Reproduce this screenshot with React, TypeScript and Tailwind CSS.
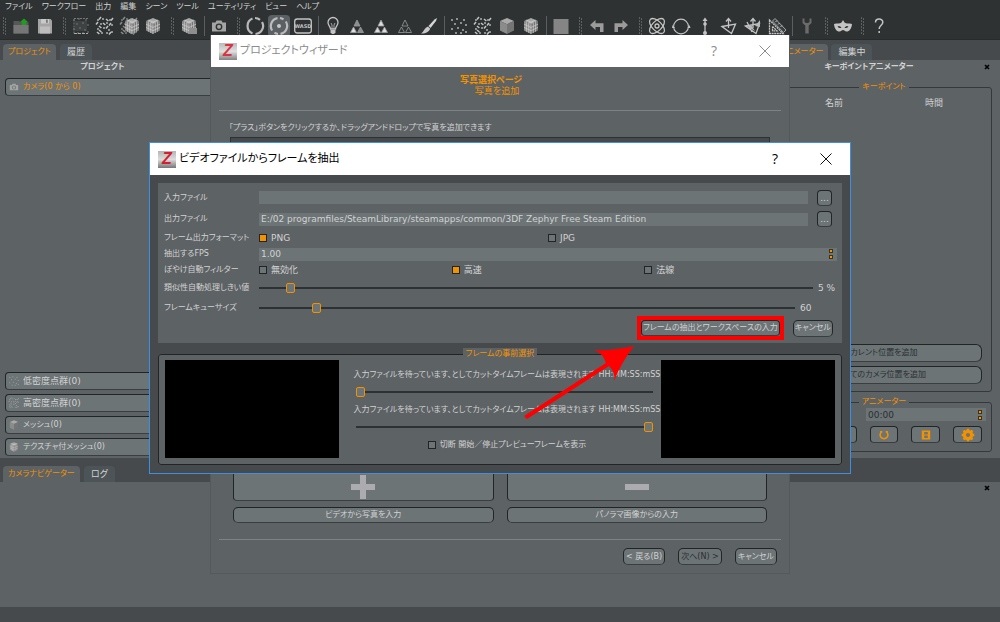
import React, { useState } from "react";

const stroke = { fill: "none", stroke: "#c4c4c4", strokeWidth: 1.3 } as const;

type IconProps = { children: React.ReactNode; className?: string };

function Icon({ children, className = "size-5" }: IconProps) {
  return (
    <svg viewBox="0 0 20 20" className={className} aria-hidden="true">
      {children}
    </svg>
  );
}

function Dots({ dense, color = "#c4c4c4" }: { dense?: boolean; color?: string }) {
  const sparse = [
    [3, 4], [8, 3], [15, 4], [6, 8], [12, 7], [17, 9], [3, 13], [9, 12], [14, 14], [7, 17], [12, 17], [17, 16],
  ];
  const extra = [
    [5, 2], [12, 4], [2, 7], [9, 8], [15, 8], [5, 11], [12, 11], [5, 15], [15, 17], [3, 17], [17, 3],
  ];
  return (
    <g fill={color}>
      {sparse.map(([x, y]) => (
        <rect key={`${x}-${y}`} x={x - 0.8} y={y - 0.8} width="1.6" height="1.6" />
      ))}
      {dense &&
        extra.map(([x, y], i) => (
          <path
            key={`${x}-${y}`}
            d={i % 2 ? `M${x - 1} ${y - 1} l2.4 2` : `M${x + 1} ${y - 1} l-2 2.4`}
            stroke={color}
            strokeWidth="1.5"
          />
        ))}
    </g>
  );
}

function Cube({ mesh }: { mesh?: boolean }) {
  return (
    <g>
      <path d="M10 2 L17 5 L10 8.3 L3 5Z" fill="#a9a9a9" />
      <path d="M3 5 L10 8.3 V18 L3 14.5Z" fill="#8b8b8b" />
      <path d="M17 5 L10 8.3 V18 L17 14.5Z" fill="#757575" />
      {mesh && (
        <path
          d="M3 8.2 L10 11.5 L17 8.2 M3 11.4 L10 14.7 L17 11.4 M5.4 6 V15.7 M7.7 7.2 V16.9 M12.3 7.2 V16.9 M14.6 6 V15.7 M5.4 4 L12.3 7.2 M14.6 4 L7.7 7.2 M10 8.3V18"
          fill="none"
          stroke="#d0d0d0"
          strokeWidth="0.7"
        />
      )}
    </g>
  );
}

function CameraShape({ hole = "#2e3233" }: { hole?: string }) {
  return (
    <g>
      <path d="M3 6.5 H6.5 L7.5 4.5 H12.5 L13.5 6.5 H17 V15.5 H3Z" fill="#a4a4a4" />
      <circle cx="10" cy="10.8" r="3.4" fill={hole} />
      <circle cx="10" cy="10.8" r="2" fill="#a4a4a4" />
    </g>
  );
}

function Triangles({ a, b, c }: { a: string; b: string; c: string }) {
  return (
    <g stroke="#9a9a9a" strokeWidth="0.8">
      <path d="M10 4 L13 10 H7Z" fill={a} />
      <path d="M6.5 11 L9.5 16.5 H3.5Z" fill={b} />
      <path d="M13.5 11 L16.5 16.5 H10.5Z" fill={c} />
    </g>
  );
}

type Tool = { kind: "handle" } | { kind: "sep" } | { kind: "tool"; label: string; on?: boolean; art: React.ReactNode };

const handle: Tool = { kind: "handle" };
const sep: Tool = { kind: "sep" };
const tool = (label: string, art: React.ReactNode, on?: boolean): Tool => ({ kind: "tool", label, art, on });

const tools: Tool[] = [
  handle,
  tool("open", (
    <g>
      <path d="M2.5 5 H8 L9.5 6.5 H17.5 V17.5 H2.5Z" fill="#575757" />
      <path d="M2.5 9 H17.5 V17.5 H2.5Z" fill="#767676" />
      <path d="M13 2.5 L17.5 6.5 H15.3 V9 H10.7 V6.5 H8.5Z" fill="#249a24" />
    </g>
  )),
  tool("save", (
    <g>
      <path d="M3 3 H15.5 L17 4.5 V17.5 H3Z" fill="#a5a5a5" />
      <rect x="6" y="3" width="8" height="4.5" fill="#c9c9c9" />
      <rect x="11" y="3.6" width="1.8" height="3.2" fill="#777" />
      <rect x="5" y="10.5" width="10" height="7" fill="#bdbdbd" />
    </g>
  )),
  handle,
  tool("sparse", (
    <g>
      <rect x="4" y="5" width="12" height="10" fill="#3f4243" />
      <Dots color="#696969" />
      <path d="M3 17.5 V2.5 H17" fill="none" stroke="#777" strokeWidth="1" strokeDasharray="2 1" />
      <path d="M3 17.5 H17" stroke="#aaa" strokeWidth="1" strokeDasharray="3 1" />
    </g>
  )),
  tool("dense", <Dots dense />),
  tool("mesh", <g><Dots dense color="#8b8b8b" /><g transform="translate(3 0)"><Cube mesh /></g></g>),
  tool("texture", <Cube mesh />),
  handle,
  tool("export", <g><Cube mesh /><path d="M11 12 H18 V18 H9Z" fill="#8e8e8e" /></g>),
  sep,
  tool("camera", <CameraShape />),
  handle,
  tool("orbit", <path d="M7.5 2.6 A8 8 0 0 0 7.5 17.4 M10.5 18 A8 8 0 0 0 17 6 M10 2 A8 8 0 0 1 15 3.8" fill="none" stroke="#b9b9b9" strokeWidth="2.2" />),
  tool("pivot", (
    <g>
      <path d="M8.5 2.2 A8 8 0 0 0 3.2 14.5 M11.5 17.8 A8 8 0 0 0 16.8 5.5 M11 2 A8 8 0 0 1 14.5 3.4 M9 18 A8 8 0 0 1 5.5 16.6" fill="none" stroke="#bcbcbc" strokeWidth="2.2" />
      <circle cx="10" cy="10" r="2" fill="#c8c8c8" />
    </g>
  ), true),
  tool("wasd", (
    <g>
      <rect x="1.7" y="3" width="16.6" height="14" rx="2.5" {...stroke} />
      <text x="10" y="12.2" textAnchor="middle" fontSize="5" fontWeight="700" fill="#c4c4c4">WASD</text>
    </g>
  )),
  sep,
  tool("light", (
    <g>
      <path d="M7.5 13 C7.5 10.5 5 9.5 5 6.5 A5 5 0 0 1 15 6.5 C15 9.5 12.5 10.5 12.5 13Z" {...stroke} />
      <path d="M8 7 L9 9 V13 M12 7 L11 9 V13" {...stroke} strokeWidth="0.8" />
      <path d="M7.5 14 H12.5 V16.5 L11 18 H9 L7.5 16.5Z" fill="#c4c4c4" />
    </g>
  )),
  tool("triangles one", <Triangles a="#8d8d8d" b="#dedede" c="#8d8d8d" />),
  tool("triangles all", <Triangles a="#dedede" b="#dedede" c="#dedede" />),
  tool("triangles wire", <Triangles a="none" b="none" c="none" />),
  tool("brush", (
    <g>
      <path d="M18 2 L17 5 L11.5 12 L9.5 10 L15.5 3.5Z" fill="#d6d6d6" />
      <path d="M9 10.5 L11.2 12.8 C10 16 6 18 2 17.5 C5 16 5 12 9 10.5Z" fill="#c9c9c9" />
    </g>
  )),
  sep,
  tool("sparse cloud", <Dots />),
  tool("dense cloud", <Dots dense />),
  tool("solid cube", <Cube />),
  tool("textured cube", <Cube mesh />),
  sep,
  tool("plane", <rect x="2.5" y="3" width="15" height="15" fill="#858585" />),
  handle,
  tool("undo", <path d="M3 9 L8.5 4 V7.2 H16.5 V16 H13 V11 H8.5 V14Z" fill="#9b9b9b" />),
  tool("redo", <path d="M17 9 L11.5 4 V7.2 H3.5 V16 H7 V11 H11.5 V14Z" fill="#9b9b9b" />),
  handle,
  tool("atom", (
    <g {...stroke}>
      <ellipse cx="10" cy="10" rx="9.4" ry="4.8" transform="rotate(45 10 10)" />
      <ellipse cx="10" cy="10" rx="9.4" ry="4.8" transform="rotate(-45 10 10)" />
      <circle cx="10" cy="10" r="2" />
    </g>
  )),
  tool("circle", <g><circle cx="10" cy="10.5" r="7.4" {...stroke} strokeWidth="1.1" /><path d="M1.5 9 l-0.5 3 h3Z M18.5 9 l-2 3 h3Z" fill="#c4c4c4" /></g>),
  tool("height", <g><path d="M10 4 V16" {...stroke} /><path d="M10 1.5 L12.5 5 H7.5Z" fill="#c4c4c4" /><circle cx="10" cy="8" r="1.8" fill="#c4c4c4" /><circle cx="10" cy="17" r="2" fill="#c4c4c4" /></g>),
  tool("plane axis", <g><path d="M3 10.5 L16.5 8 L12.5 17.5Z M9.5 12 V3.5 M7 5.5 L9.5 2.5 L12 5.5" {...stroke} /></g>),
  tool("move plane", <g><path d="M2.5 10 L16.5 7.5 L13 17.5Z M10 12 V3 M7.5 5.5 L10 2.5 L12.5 5.5 M4 6 L9 16" {...stroke} /><path d="M3 10 L8 9 L12 15Z M12 10 L17 4 V11Z" fill="#b9b9b9" /></g>),
  tool("measure", (
    <g>
      <path d="M2.5 4 V17.5 H16Z M5.5 10.5 V14.8 H10Z" {...stroke} strokeDasharray="2 0.6" />
      <path d="M8 2.5 L19 14 L16.5 16.5 L5.5 5Z" fill="#3a3e3f" stroke="#b0b0b0" strokeWidth="0.9" />
      <path d="M8.5 6 l1.5-1.5 M11 8.5 l1.5-1.5 M13.5 11 l1.5-1.5" stroke="#ddd" strokeWidth="0.8" />
    </g>
  )),
  sep,
  tool("settings", <path d="M5.5 2.5 V7 L8.3 9.5 V17.5 H11.7 V9.5 L14.5 7 V2.5 H12.5 V6 L11 7 H9 L7.5 6 V2.5Z" fill="#6b6b6b" />),
  handle,
  tool("mask", (
    <g>
      <path d="M1 8 C4 7 7 8 8.5 6.5 L10 4 L11.5 6.5 C13 8 16 7 19 8 C18.5 13 16 16 13 15.5 C11.5 15 11 14 10 14 C9 14 8.5 15 7 15.5 C4 16 1.5 13 1 8Z" fill="#c4c4c4" />
      <path d="M4.5 10.5 q2-1.4 4 1 q-2 1.4-4-1Z M15.5 10.5 q-2-1.4-4 1 q2 1.4 4-1Z" fill="#2e3233" />
    </g>
  )),
  handle,
  tool("help", <path d="M6.5 6.5 C6.5 2 13.8 2 13.8 6.3 C13.8 9.3 10.2 9.3 10.2 13 M10.2 15 V17" {...stroke} strokeWidth="1.5" />),
];

const menus = ["ファイル", "ワークフロー", "出力", "編集", "シーン", "ツール", "ユーティリティ", "ビュー", "ヘルプ"];

function Toolbar() {
  return (
    <div className="-ml-[3px] flex h-[26px] items-center">
      {tools.map((t, i) => {
        if (t.kind === "handle")
          return (
            <svg key={i} viewBox="0 0 12 18" className="h-[18px] w-3 shrink-0" aria-hidden="true">
              {[1, 4, 7, 10, 13, 16].map((y) => (
                <path key={y} d={`M6 ${y} h1 M8 ${y + 1} h1`} stroke="#8a8d8e" strokeWidth="1" />
              ))}
            </svg>
          );
        if (t.kind === "sep")
          return (
            <div key={i} className="flex h-5 w-[6px] shrink-0 justify-center">
              <div className="w-px bg-[#5b5f61]" />
            </div>
          );
        return (
          <div key={i} className="flex w-6 shrink-0 justify-center">
            <button
              aria-label={t.label}
              className={
                t.on
                  ? "flex h-[22px] w-[22px] items-center justify-center rounded-sm bg-[#5a6064]"
                  : "flex h-[22px] w-[22px] items-center justify-center"
              }
            >
              <Icon>{t.art}</Icon>
            </button>
          </div>
        );
      })}
    </div>
  );
}

function Tab({ children, active }: { children: React.ReactNode; active?: boolean }) {
  return (
    <button
      className={
        active
          ? "h-4 shrink-0 whitespace-nowrap rounded-t-sm bg-[#5d6265] px-[5px] text-[#f39200]"
          : "h-4 shrink-0 whitespace-nowrap rounded-t-sm bg-[#4d5457] px-[7px] text-[9px]"
      }
    >
      {children}
    </button>
  );
}

const bevel = "border border-[#222526] border-b-[#3a3e40] bg-[#6c7476]";

function ListButton({ icon, children, className = "" }: { icon: React.ReactNode; children: React.ReactNode; className?: string }) {
  return (
    <button className={`${bevel} flex h-[18px] w-full items-center gap-[3px] rounded-[4px] px-[2px] ${className}`}>
      <Icon className="size-3">{icon}</Icon>
      {children}
    </button>
  );
}

function LeftDock() {
  return (
    <section className="flex w-[230px] shrink-0 flex-col gap-1 pb-[2px] pl-[5px]">
      <h2 className="mr-[30px] mt-[1px] h-[13px] text-center font-bold">プロジェクト</h2>
      <ListButton className="text-[#f39200]" icon={<CameraShape hole="#6c7476" />}>カメラ(0 から 0)</ListButton>
      <div className="mt-auto flex flex-col gap-1">
        <ListButton className="text-[9px]" icon={<Dots color="#a0a0a0" />}>低密度点群(0)</ListButton>
        <ListButton className="text-[9px]" icon={<Dots dense color="#a0a0a0" />}>高密度点群(0)</ListButton>
        <ListButton icon={<Cube />}>メッシュ(0)</ListButton>
        <ListButton icon={<Cube mesh />}>テクスチャ付メッシュ(0)</ListButton>
      </div>
    </section>
  );
}

function CloseMark() {
  return (
    <button aria-label="close" className="flex h-3 w-[26px] shrink-0 items-center justify-center">
      <svg viewBox="0 0 6 6" className="size-[6px]" aria-hidden="true">
        <path d="M1 1 L5 5 M5 1 L1 5" stroke="#000" strokeWidth="1.6" />
      </svg>
    </button>
  );
}

function SpinMarks() {
  return (
    <span className="flex flex-col gap-[2px]" aria-hidden="true">
      <span className="size-1 border border-[#3b3320] bg-[#f39200]" />
      <span className="size-1 border border-[#3b3320] bg-[#f39200]" />
    </span>
  );
}

function RightDock() {
  const wide = `${bevel} mx-[9px] h-[18px] rounded-md text-[#2b2f31]`;
  const key = `${bevel} flex h-[17px] flex-1 items-center justify-center rounded-[4px] text-[#f39200]`;
  return (
    <section className="flex w-[236px] shrink-0 flex-col">
      <div className="flex h-[14px] items-center">
        <h2 className="flex-1 text-center font-bold">キーポイントアニメーター</h2>
        <CloseMark />
      </div>
      <fieldset className="ml-3 mr-2 mt-[7px] flex flex-1 flex-col rounded-[3px] border border-[#35393b] pb-[7px]">
        <legend className="mx-auto h-3 px-[3px] leading-3 text-[#f39200]">キーポイント</legend>
        <table className="mx-[7px] table-fixed text-[9px]">
          <thead>
            <tr>
              <th className="h-5 text-center font-normal">名前</th>
              <th className="h-5 text-center font-normal">時間</th>
            </tr>
          </thead>
        </table>
        <div className="mt-auto flex flex-col gap-1">
          <button className={wide}>カレント位置を追加</button>
          <button className={wide}>全てのカメラ位置を追加</button>
        </div>
      </fieldset>
      <fieldset className="mb-[6px] ml-3 mr-2 mt-1 rounded-[3px] border border-[#35393b] pb-2">
        <legend className="mx-auto h-3 px-[3px] leading-3 text-[#f39200]">アニメーター</legend>
        <div className="ml-[89px] mr-[5px] flex h-[13px] items-center bg-[#6c7476] pr-1 text-[#2b2f31]">
          <input aria-label="時間" defaultValue="00:00" className="w-full min-w-0 bg-transparent px-[2px] text-[9px] outline-none" />
          <SpinMarks />
        </div>
        <div className="mx-[9px] mt-[5px] flex gap-[13px]">
          <button aria-label="play" className={key}><Icon className="size-3"><path d="M5 3 L16 10 L5 17Z" fill="#f39200" /></Icon></button>
          <button aria-label="stop" className={key}><Icon className="size-3"><rect x="4" y="4" width="12" height="12" fill="#f39200" /></Icon></button>
          <button aria-label="loop" className={key}><Icon className="size-3"><path d="M7 4.5 H3.5 M7 4 A6.5 6.5 0 1 0 13 4 M13 4.5 H16.5" fill="none" stroke="#f39200" strokeWidth="2.6" /></Icon></button>
          <button aria-label="film" className={key}>
            <Icon className="size-3"><path fillRule="evenodd" d="M3 2.5 H17 V17.5 H3Z M7 5 V9 H13 V5Z M7 11 V15 H13 V11Z" fill="#f39200" /></Icon>
          </button>
          <button aria-label="gear" className={key}>
            <Icon className="size-[14px]">
              <circle cx="10" cy="10" r="5.2" fill="none" stroke="#f39200" strokeWidth="4.4" />
              <path d="M10 1 V4 M10 16 V19 M1 10 H4 M16 10 H19 M3.6 3.6 L5.5 5.5 M14.5 14.5 L16.4 16.4 M3.6 16.4 L5.5 14.5 M14.5 5.5 L16.4 3.6" stroke="#f39200" strokeWidth="3.4" />
            </Icon>
          </button>
        </div>
      </fieldset>
    </section>
  );
}

function Logo({ faded }: { faded?: boolean }) {
  return (
    <span className={`flex h-[17px] w-[18px] shrink-0 items-center justify-center bg-linear-to-b from-[#b5b5b5] via-[#dcdcdc] to-[#777] font-['Liberation_Sans',sans-serif] text-[16px] font-bold italic leading-4 text-[#d3202f] ${faded ? "opacity-90" : ""}`}>
      Z
    </span>
  );
}

function TitleBar({ title, inactive }: { title: string; inactive?: boolean }) {
  const ink = inactive ? "#8c8c8c" : "#111";
  return (
    <header className={`flex h-8 items-center gap-[3px] bg-white pl-2 text-[11px] leading-4 ${inactive ? "text-[#8c8c8c]" : "text-black"}`}>
      <Logo faded={inactive} />
      <h1 className="flex-1">{title}</h1>
      <button aria-label="help" className="flex w-[46px] justify-center font-['Open_Sans',sans-serif] text-[14px]">?</button>
      <button aria-label="close" className="flex w-[49px] justify-center">
        <svg viewBox="0 0 12 12" className="size-3" aria-hidden="true">
          <path d="M0.5 0.5 L11.5 11.5 M11.5 0.5 L0.5 11.5" stroke={ink} strokeWidth="1" />
        </svg>
      </button>
    </header>
  );
}

function Wizard() {
  const big = `${bevel} flex h-[60px] items-center justify-center rounded-[4px] pt-8`;
  const small = `${bevel} h-4 rounded-[5px]`;
  const nav = `${bevel} h-[17px] rounded-[5px] px-[2px]`;
  return (
    <section className="flex h-[539px] w-[580px] flex-col border-x border-b border-[#54595c] bg-[#5d6265]">
      <TitleBar title="プロジェクトウィザード" inactive />
      <div className="flex flex-1 flex-col px-2">
        <div className="flex h-11 flex-col items-center border-b border-[#7d8385] pt-2 text-[9px] leading-[11px] text-[#f39200]">
          <strong className="pr-[18px]">写真選択ページ</strong>
          <span className="pr-[6px]">写真を追加</span>
        </div>
        <p className="mt-[9px] h-4 px-[10px] leading-4">「プラス」ボタンをクリックするか、ドラッグアンドドロップで写真を追加できます</p>
        <div className="mx-[11px] mt-px flex-1 border border-[#2d3133] bg-[#464a4c]" />
        <div className="mx-[14px] mt-4 grid grid-cols-2 gap-x-[13px] gap-y-[6px]">
          <button aria-label="追加" className={big}>
            <svg viewBox="0 0 24 24" className="size-6" aria-hidden="true"><path d="M9 0 H15 V9 H24 V15 H15 V24 H9 V15 H0 V9 H9Z" fill="#acacb0" /></svg>
          </button>
          <button aria-label="削除" className={big}>
            <svg viewBox="0 0 24 24" className="size-6" aria-hidden="true"><path d="M0 9 H24 V15 H0Z" fill="#acacb0" /></svg>
          </button>
          <button className={small}>ビデオから写真を入力</button>
          <button className={small}>パノラマ画像からの入力</button>
        </div>
        <div className="mt-4 flex h-[34px] justify-end gap-[13px] border-t border-[#7d8385] pr-1 pt-2">
          <button className={nav}>&lt; 戻る(B)</button>
          <button className={`${nav} text-[#2b2f31]`}>次へ(N) &gt;</button>
          <button className={nav}>キャンセル</button>
        </div>
      </div>
    </section>
  );
}

const boxClass = "size-2 shrink-0 appearance-none border border-[#222526] bg-[#6c7476] checked:bg-[#f39200]";
const rangeClass =
  "h-[10px] min-w-0 appearance-none bg-transparent [&::-webkit-slider-runnable-track]:h-[2px] [&::-webkit-slider-runnable-track]:bg-[#2d3133] [&::-webkit-slider-thumb]:-mt-1 [&::-webkit-slider-thumb]:h-[10px] [&::-webkit-slider-thumb]:w-[9px] [&::-webkit-slider-thumb]:appearance-none [&::-webkit-slider-thumb]:rounded-[2px] [&::-webkit-slider-thumb]:border [&::-webkit-slider-thumb]:border-[#f39200] [&::-webkit-slider-thumb]:bg-[#6c7476]";

function Choice({ name, label, value, onPick }: { name: string; label: string; value: string; onPick: (v: string) => void }) {
  return (
    <label className="flex flex-1 items-center gap-1 text-[9px]">
      <input type="radio" name={name} checked={value === label} onChange={() => onPick(label)} className={boxClass} />
      {label}
    </label>
  );
}

function FileRow({ id, label, value, height }: { id: string; label: string; value: string; height: string }) {
  return (
    <div className={`flex items-center ${height}`}>
      <label htmlFor={id} className="w-[95px] shrink-0 whitespace-nowrap">{label}</label>
      <input id={id} defaultValue={value} className="h-[13px] min-w-0 flex-1 bg-[#6c7476] px-[2px] text-[9px] outline-none" />
      <button aria-label={`${label} 参照`} className={`${bevel} ml-[9px] mr-[5px] h-4 w-[15px] shrink-0 rounded-[4px] text-[9px] leading-3`}>...</button>
    </div>
  );
}

function SliderRow({ id, label, max, initial, unit, trackEnd }: { id: string; label: string; max: number; initial: number; unit: string; trackEnd: string }) {
  const [v, setV] = useState(initial);
  return (
    <div className="flex h-5 items-center">
      <label htmlFor={id} className="w-[95px] shrink-0 whitespace-nowrap">{label}</label>
      <input id={id} type="range" min={0} max={max} value={v} onChange={(e) => setV(Number(e.target.value))} className={`${rangeClass} flex-1`} />
      <output htmlFor={id} className={`shrink-0 whitespace-nowrap pl-[5px] text-[9px] ${trackEnd}`}>{v}{unit}</output>
    </div>
  );
}

function CutRow({ id, initial }: { id: string; initial: number }) {
  return (
    <>
      <label htmlFor={id} className="flex h-[14px] items-center justify-center whitespace-nowrap">
        入力ファイルを待っています、としてカットタイムフレームは表現されます HH:MM:SS:mSS
      </label>
      <input id={id} type="range" defaultValue={initial} className={`${rangeClass} mb-[6px] ml-px mr-[6px] mt-[5px]`} />
    </>
  );
}

function ExtractDialog() {
  const [format, setFormat] = useState("PNG");
  const [filter, setFilter] = useState("高速");
  return (
    <section className="relative flex w-[702px] flex-col border border-[#3d8fe0] bg-[#464a4c]">
      <TitleBar title="ビデオファイルからフレームを抽出" />
      <form className="flex flex-col p-2" onSubmit={(e) => e.preventDefault()}>
        <div className="flex flex-col bg-[#5d6265] pb-[5px] pl-[6px] pr-[5px] pt-1">
          <FileRow id="in" label="入力ファイル" value="" height="h-[21px]" />
          <FileRow id="out" label="出力ファイル" value="E:/02 programfiles/SteamLibrary/steamapps/common/3DF Zephyr Free Steam Edition" height="h-[22px]" />
          <div className="flex h-4 items-center">
            <span className="w-[95px] shrink-0 whitespace-nowrap">フレーム出力フォーマット</span>
            <Choice name="format" label="PNG" value={format} onPick={setFormat} />
            <Choice name="format" label="JPG" value={format} onPick={setFormat} />
          </div>
          <div className="flex h-4 items-center">
            <label htmlFor="fps" className="w-[95px] shrink-0">抽出するFPS</label>
            <div className="flex h-[13px] flex-1 items-center bg-[#6c7476] pr-1">
              <input id="fps" defaultValue="1.00" className="min-w-0 flex-1 bg-transparent px-[2px] text-[9px] outline-none" />
              <SpinMarks />
            </div>
          </div>
          <div className="flex h-4 items-center">
            <span className="w-[95px] shrink-0 whitespace-nowrap">ぼやけ自動フィルター</span>
            <Choice name="filter" label="無効化" value={filter} onPick={setFilter} />
            <Choice name="filter" label="高速" value={filter} onPick={setFilter} />
            <Choice name="filter" label="法線" value={filter} onPick={setFilter} />
          </div>
          <SliderRow id="similar" label="類似性自動処理しきい値" max={100} initial={5} unit=" %" trackEnd="w-6" />
          <SliderRow id="queue" label="フレームキューサイズ" max={600} initial={60} unit="" trackEnd="w-[42px]" />
          <div className="flex h-5 items-center justify-end gap-[9px] pr-1">
            <div className="-my-1 border-4 border-[#f00] bg-[#5d6265]">
              <button className={`${bevel} block h-4 whitespace-nowrap rounded-[4px] px-px`}>フレームの抽出とワークスペースの入力</button>
            </div>
            <button className={`${bevel} h-[17px] whitespace-nowrap rounded-[5px] px-px`}>キャンセル</button>
          </div>
        </div>
        <fieldset className="mt-[5px] min-w-0 rounded-[3px] border border-[#222526] bg-[#5d6265] pb-[6px]">
          <legend className="mx-auto h-3 bg-[#5d6265] px-[3px] leading-3 text-[#f39200]">フレームの事前選択</legend>
          <div className="flex px-[6px]">
            <div className="h-[98px] w-[174px] shrink-0 bg-black" />
            <div className="flex min-w-0 flex-1 flex-col pl-4 pr-[2px] pt-2">
              <CutRow id="start" initial={0} />
              <CutRow id="end" initial={100} />
              <label className="flex h-[14px] items-center justify-center gap-1">
                <input type="checkbox" className={boxClass} />
                切断 開始／停止プレビューフレームを表示
              </label>
            </div>
            <div className="h-[98px] w-[174px] shrink-0 bg-black" />
          </div>
        </fieldset>
      </form>
      <svg viewBox="0 0 112 76" className="pointer-events-none absolute left-[373px] top-[202px] h-[76px] w-[112px]" aria-hidden="true">
        <path d="M1 71 L83 18 Q80 8 71 5 Q90 6 111 1 Q98 18 91 36 Q93 28 86 21 L4 74Z" fill="#f00" />
      </svg>
    </section>
  );
}

export default function App() {
  return (
    <div className="relative flex min-h-screen flex-col overflow-hidden bg-[#5d6265] font-['DejaVu_Sans','Noto_Sans_CJK_JP',sans-serif] text-[8px] leading-3 text-[#d2d2d2] [font-feature-settings:'palt']">
      <header className="flex flex-col border-b border-[#282b2c] bg-[#2e3233]">
        <nav className="flex h-[13px] items-center gap-[9px] pl-[5px]">
          {menus.map((m) => (
            <button key={m} className="whitespace-nowrap">{m}</button>
          ))}
        </nav>
        <Toolbar />
      </header>
      <div className="flex h-5 items-end justify-between bg-[#464a4c] pl-[3px]">
        <div className="flex gap-1"><Tab active>プロジェクト</Tab><Tab>履歴</Tab></div>
        <div className="flex w-[226px] gap-[3px]"><Tab active>アニメーター</Tab><Tab>編集中</Tab></div>
      </div>
      <main className="flex flex-1 justify-between">
        <LeftDock />
        <RightDock />
      </main>
      <div className="flex h-6 items-end gap-1 bg-[#464a4c] pl-[3px]">
        <Tab active>カメラナビゲーター</Tab>
        <Tab>ログ</Tab>
      </div>
      <div className="flex h-[125px] justify-end"><CloseMark /></div>
      <footer className="h-[15px] bg-[#464a4c]" />
      <div className="absolute inset-x-0 top-[35px] flex justify-center"><Wizard /></div>
      <div className="absolute inset-x-0 top-[142px] flex justify-center"><ExtractDialog /></div>
    </div>
  );
}
